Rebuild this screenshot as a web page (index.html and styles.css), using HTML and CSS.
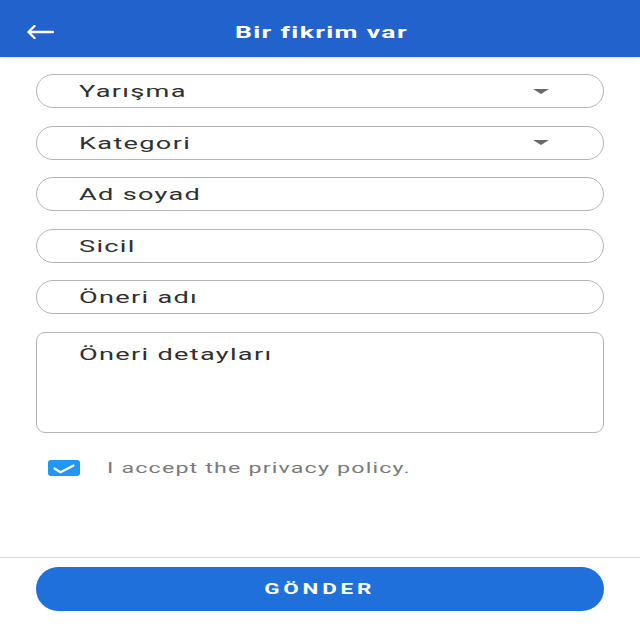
FILE: index.html
```html
<!DOCTYPE html>
<html lang="tr">
<head>
<meta charset="utf-8">
<title>Bir fikrim var</title>
<link rel="stylesheet" href="styles.css">
</head>
<body>
<div class="app">
  <header class="topbar">
    <button class="back" aria-label="Geri">
      <svg width="28" height="14" viewBox="0 0 28 14"><path d="M27 7H2.5M8.5 1L2.5 7l6 6" fill="none" stroke="#fff" stroke-width="2.4" stroke-linecap="round" stroke-linejoin="round"/></svg>
    </button>
    <h1 class="title"><span class="wide">Bir fikrim var</span></h1>
    <span></span>
  </header>

  <main class="form">
    <div class="field select"><span class="wide label">Yarışma</span><span class="caret"></span></div>
    <div class="field select"><span class="wide label">Kategori</span><span class="caret"></span></div>
    <div class="field"><span class="wide label">Ad soyad</span></div>
    <div class="field"><span class="wide label">Sicil</span></div>
    <div class="field"><span class="wide label">Öneri adı</span></div>
    <div class="area"><span class="wide label">Öneri detayları</span></div>
    <label class="consent">
      <span class="checkbox">
        <svg width="22" height="10" viewBox="0 0 22 10"><path d="M1.5 4.5L7.5 8.2L20.5 1.5" fill="none" stroke="#fff" stroke-width="2.2" stroke-linecap="round" stroke-linejoin="round"/></svg>
      </span>
      <span class="wide consent-text">I accept the privacy policy.</span>
    </label>
  </main>

  <footer class="footer">
    <button class="submit"><span class="wide">GÖNDER</span></button>
  </footer>
</div>
</body>
</html>
```

FILE: styles.css
```css
* { box-sizing: border-box; }
html, body { margin: 0; padding: 0; background: #fff; }
body { font-family: Roboto, "Noto Sans", "Liberation Sans", sans-serif; }

.app {
  width: 640px;
  height: 640px;
  display: flex;
  flex-direction: column;
}

.wide {
  display: inline-block;
  transform: scaleX(1.6);
  transform-origin: left center;
  white-space: nowrap;
}

.topbar {
  height: 57px;
  flex: none;
  background: #2262cc;
  display: grid;
  grid-template-columns: 1fr auto 1fr;
  align-items: center;
  padding-top: 6px;
  box-shadow: 0 1px 2px rgba(0,0,0,0.15);
  position: relative;
  z-index: 1;
}
.back {
  justify-self: start;
  margin-left: 26px;
  padding: 0;
  border: 0;
  background: none;
  display: flex;
  margin-top: 1px;
}
.title {
  margin: 0;
  color: #fff;
  font-size: 17px;
  font-weight: 700;
  letter-spacing: 0.85px;
  width: 172px;
  margin-left: 2px;
}
.title .wide { transform: scaleX(1.56); }

.form {
  flex: 1;
  padding: 17px 36px 0;
  display: flex;
  flex-direction: column;
  gap: 17.5px;
}

.field {
  height: 34px;
  border: 1px solid #b5b5b5;
  border-radius: 17px;
  padding-left: 42px;
  padding-right: 54px;
  display: flex;
  align-items: center;
  justify-content: space-between;
}
.label {
  color: #303030;
  font-size: 17px;
  letter-spacing: 0.8px;
}
.caret {
  width: 0;
  height: 0;
  border-left: 8px solid transparent;
  border-right: 8px solid transparent;
  border-top: 5px solid #6a6a6a;
}

.area {
  height: 101px;
  border: 1px solid #b5b5b5;
  border-radius: 9px;
  padding: 11px 0 0 42px;
}

.consent {
  display: flex;
  align-items: center;
  margin-top: 9px;
  padding-left: 12px;
  gap: 27px;
}
.checkbox {
  width: 32px;
  height: 16px;
  border-radius: 3px;
  background: #2196f3;
  display: flex;
  align-items: center;
  justify-content: center;
  padding-top: 1px;
}
.consent-text {
  color: #7a7a7a;
  font-size: 15px;
  letter-spacing: 0.75px;
  transform: scaleX(1.55);
}

.footer {
  flex: none;
  border-top: 1px solid #dedede;
  padding: 9px 36px 29px;
}
.submit {
  width: 100%;
  height: 44px;
  border: 0;
  border-radius: 22px;
  background: #2070dc;
  color: #fff;
  font-family: inherit;
  font-size: 14px;
  font-weight: 700;
  letter-spacing: 2.4px;
  display: flex;
  align-items: center;
  justify-content: center;
  padding: 0;
}
.submit .wide { transform-origin: center; }
```
